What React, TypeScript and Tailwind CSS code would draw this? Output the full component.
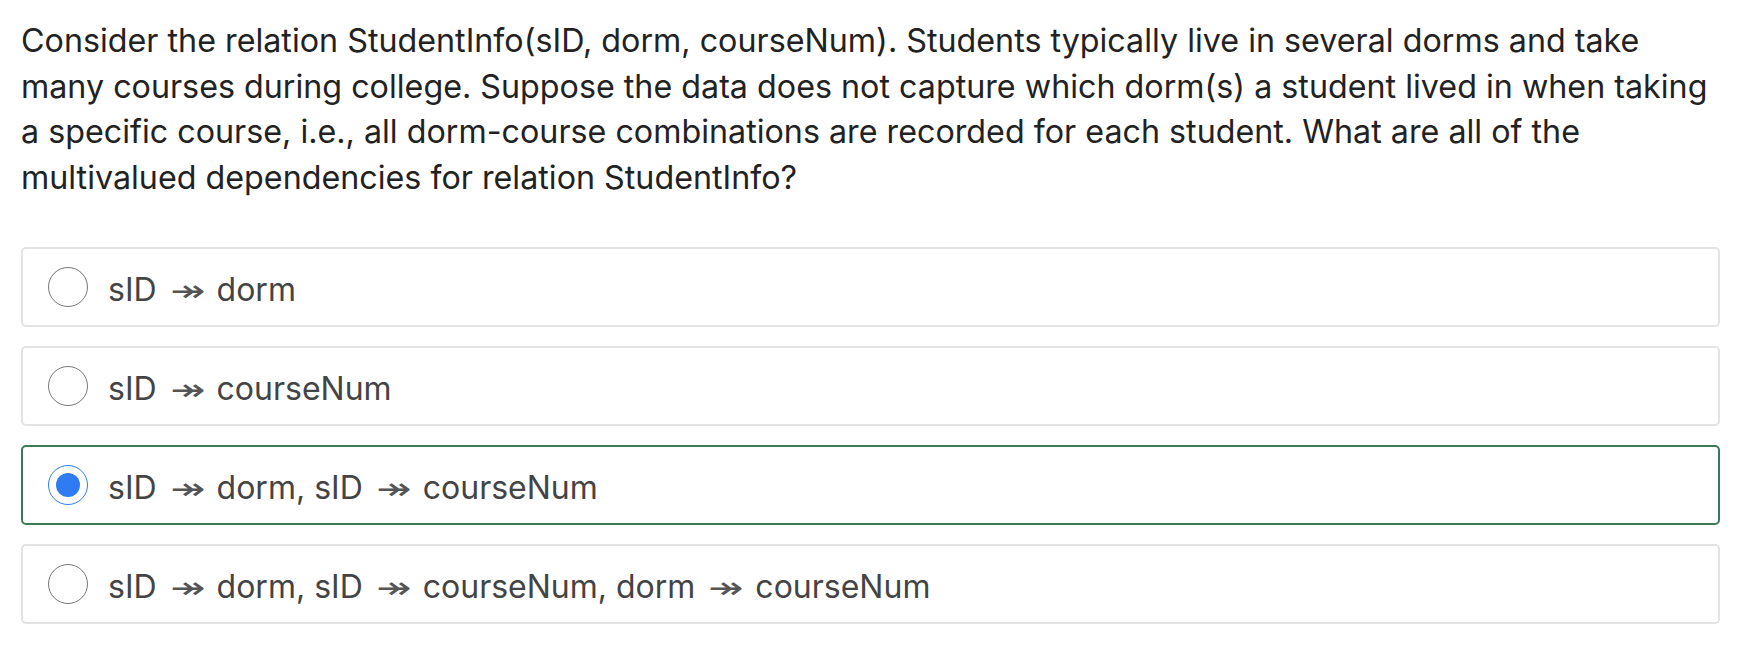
import React from "react";

const options = [
  ["sID", "dorm"],
  ["sID", "courseNum"],
  ["sID", "dorm, sID", "courseNum"],
  ["sID", "dorm, sID", "courseNum, dorm", "courseNum"],
];

function Arrow() {
  return (
    <span className="ml-[12px] mr-[11px] inline-block w-[37px] text-center align-baseline">
      <span className="inline-block scale-x-[1.4] text-[30px] text-[#555555] [font-family:'DejaVu_Sans',sans-serif]">↠</span>
    </span>
  );
}

export default function App() {
  const selected = 2;
  return (
    <div className="min-h-[654px] bg-white px-[21px] pt-[18px] pr-[38px] [font-family:Inter,'Noto_Sans',sans-serif]">
      <p className="text-[32.25px] leading-[45.7px] text-[#222222]">
        Consider the relation StudentInfo(sID, dorm, courseNum). Students typically live in several dorms and take many courses during college. Suppose the data does not capture which dorm(s) a student lived in when taking a specific course, i.e., all dorm-course combinations are recorded for each student. What are all of the multivalued dependencies for relation StudentInfo?
      </p>
      <div className="mt-[46px] flex flex-col gap-[19px]">
        {options.map((parts, i) => {
          const sel = i === selected;
          return (
            <div
              key={i}
              className={`flex h-[80px] items-center rounded-[5px] border-2 px-[25px] ${sel ? "border-[#3b7a54]" : "border-[#e3e3e3]"}`}
            >
              {sel ? (
                <span className="flex h-[40px] w-[40px] shrink-0 items-center justify-center rounded-full border-[1.5px] border-[#2f7bf6] bg-white">
                  <span className="h-[24px] w-[24px] rounded-full bg-[#2f7bf6]" />
                </span>
              ) : (
                <span className="h-[40px] w-[40px] shrink-0 rounded-full border-[1.5px] border-[#777777] bg-white" />
              )}
              <span className="ml-[20px] mt-[6px] whitespace-pre text-[32px] text-[#444444]">
                {parts.map((p, j) => (
                  <React.Fragment key={j}>
                    {j > 0 && <Arrow />}
                    {p}
                  </React.Fragment>
                ))}
              </span>
            </div>
          );
        })}
      </div>
    </div>
  );
}
